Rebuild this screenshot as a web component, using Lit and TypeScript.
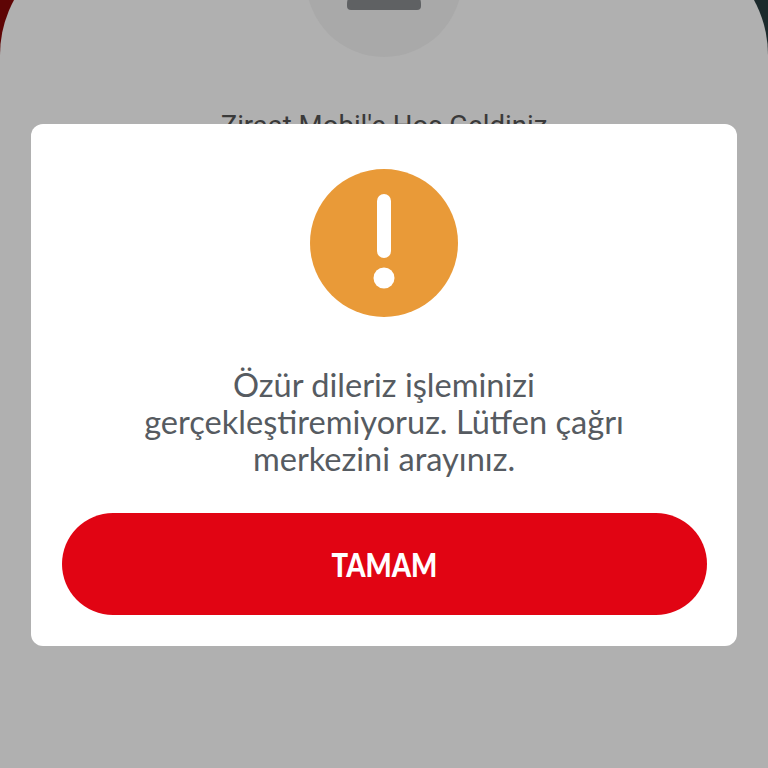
import { LitElement, html, css } from "lit";
import { customElement } from "lit/decorators.js";

@customElement("app-root")
export class AppRoot extends LitElement {
  static styles = css`
    :host { display: block; width: 768px; height: 768px; overflow: hidden; position: relative; font-family: "Lato", "Noto Sans", sans-serif; }
    .screen { width: 768px; height: 768px; background: linear-gradient(90deg, #5e0505 0, #5e0505 50%, #1c2a2c 50%, #1c2a2c 100%); overflow: hidden; }
    .sheet { height: 900px; background: #b0b0b0; border-radius: 115px 115px 0 0; margin-top: -60px; display: flex; flex-direction: column; align-items: center; }
    .avatar { width: 156px; height: 156px; border-radius: 50%; background: #a9a9a9; margin-top: -39px; flex: none; display: flex; justify-content: center; align-items: flex-end; padding-bottom: 47px; box-sizing: border-box; }
    .bar { width: 74px; height: 20px; background: #5f6163; border-radius: 14px 14px 4px 4px; }
    .welcome { margin-top: 52px; font-family: "Roboto", sans-serif; font-weight: 400; font-size: 27.6px; line-height: 34px; color: #3a3a3a; }
    .card { position: absolute; left: 31px; top: 124px; width: 706px; height: 522px; box-sizing: border-box; background: #fff; border-radius: 12px; padding: 44px 30px 31px; display: flex; flex-direction: column; align-items: center; }
    .icon { width: 150px; height: 150px; display: block; flex: none; }
    .msg { margin: 48px 0 0; width: 520px; text-align: center; font-size: 32.6px; line-height: 37px; color: #565b61; font-weight: 400; }
    .btn { margin-top: auto; width: 645px; height: 102px; border: 0; border-radius: 51px; background: #e10413; color: #fff; font: 900 32px "Lato", sans-serif; display: flex; align-items: center; justify-content: center; }
    .btn span { display: block; transform: scaleX(0.86); }
  `;
  render() {
    return html`
      <div class="screen">
        <div class="sheet">
          <div class="avatar"><div class="bar"></div></div>
          <div class="welcome">Ziraat Mobil'e Hoş Geldiniz</div>
        </div>
      </div>
      <div class="card">
        <svg class="icon" viewBox="0 0 150 150">
          <circle cx="75" cy="75" r="74" fill="#e99a38"></circle>
          <rect x="68" y="26" width="14" height="64" rx="7" fill="#fff"></rect>
          <circle cx="75" cy="110" r="10.5" fill="#fff"></circle>
        </svg>
        <p class="msg">Özür dileriz işleminizi gerçekleştiremiyoruz. Lütfen çağrı merkezini arayınız.</p>
        <button class="btn"><span>TAMAM</span></button>
      </div>
    `;
  }
}
